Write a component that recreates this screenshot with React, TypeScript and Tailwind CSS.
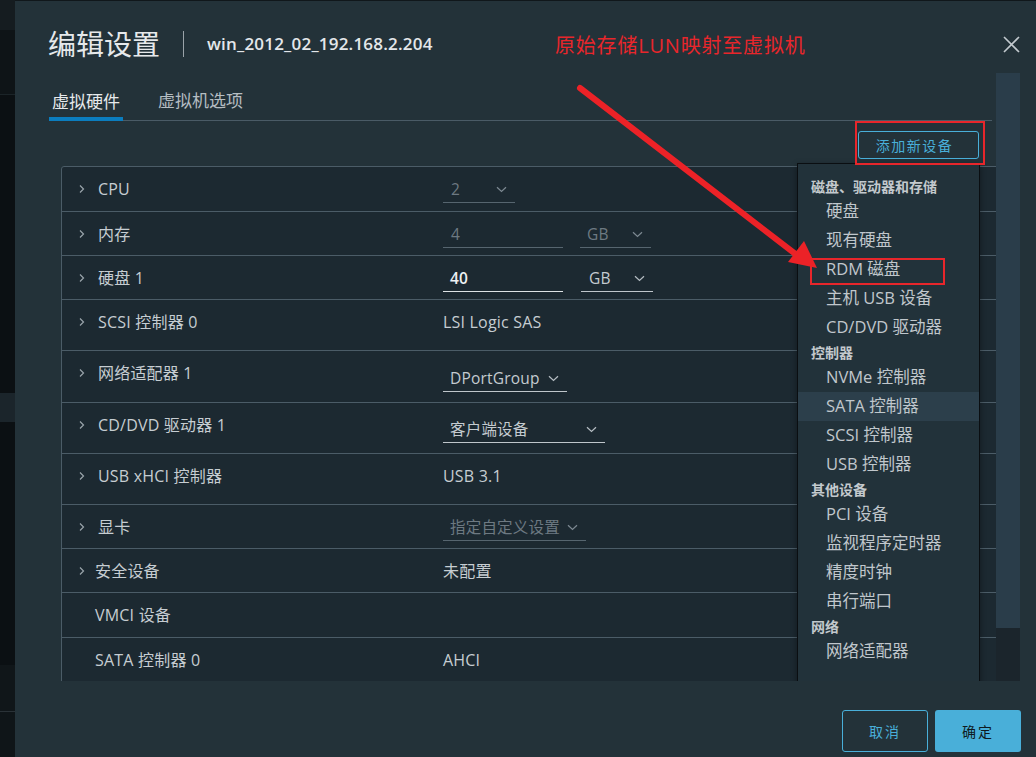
import type { ReactNode } from "react";

const FONT = "font-['Open_Sans','Noto_Sans_CJK_SC',sans-serif]";

function ChevRight() {
  return (
    <svg width="8" height="10" viewBox="0 0 8 10" className="shrink-0">
      <path d="M2 1.5 L5.5 5 L2 8.5" stroke="#9aa4ab" strokeWidth="1.2" fill="none" />
    </svg>
  );
}

function ChevDown({ color }: { color: string }) {
  return (
    <svg width="11" height="7" viewBox="0 0 11 7" className="shrink-0">
      <path d="M1 1.2 L5.5 5.5 L10 1.2" stroke={color} strokeWidth="1.2" fill="none" />
    </svg>
  );
}

type Tone = "disabled" | "normal" | "active";

const toneText: Record<Tone, string> = {
  disabled: "text-[#6d7982]",
  normal: "text-[#c4cbd0]",
  active: "text-[#eef1f3]",
};
const toneLine: Record<Tone, string> = {
  disabled: "border-[#56656f]",
  normal: "border-[#bfc6cb]",
  active: "border-[#dde2e5]",
};
const toneChev: Record<Tone, string> = {
  disabled: "#7d8992",
  normal: "#b5bdc3",
  active: "#c9d0d4",
};

function Field({
  w,
  text,
  tone,
  chevron = true,
  pl = "pl-[8px]",
}: {
  w: string;
  text: string;
  tone: Tone;
  chevron?: boolean;
  pl?: string;
}) {
  return (
    <div className={`${w} flex items-center justify-between border-b ${toneLine[tone]} ${pl} pr-[8px] pb-[3px] text-[15.5px] leading-[20px] ${toneText[tone]}`}>
      <span className={tone === "active" && !chevron ? "font-semibold" : ""}>{text}</span>
      {chevron && <ChevDown color={toneChev[tone]} />}
    </div>
  );
}

type Row = { label: string; h: string; chev: boolean; tight?: boolean; value?: ReactNode };

const rows: Row[] = [
  { label: "CPU", h: "h-[45px]", chev: true, value: <Field w="w-[72px]" text="2" tone="disabled" /> },
  {
    label: "内存",
    h: "h-[44px]",
    chev: true,
    value: (
      <div className="flex gap-[17px]">
        <Field w="w-[120px]" text="4" tone="disabled" chevron={false} />
        <Field w="w-[71px]" text="GB" tone="disabled" pl="pl-[7px]" />
      </div>
    ),
  },
  {
    label: "硬盘 1",
    h: "h-[44px]",
    chev: true,
    value: (
      <div className="flex gap-[18px]">
        <Field w="w-[120px]" text="40" tone="active" chevron={false} pl="pl-[7px]" />
        <Field w="w-[72px]" text="GB" tone="normal" pl="pl-[8px]" />
      </div>
    ),
  },
  { label: "SCSI 控制器 0", h: "h-[51px]", chev: true, value: <span className="text-[#c6cdd2]">LSI Logic SAS</span> },
  {
    label: "网络适配器 1",
    h: "h-[52px]",
    chev: true,
    value: (
      <div className="pt-[5px]">
        <Field w="w-[124px]" text="DPortGroup" tone="normal" pl="pl-[7px]" />
      </div>
    ),
  },
  {
    label: "CD/DVD 驱动器 1",
    h: "h-[51px]",
    chev: true,
    value: (
      <div className="pt-[4px]">
        <Field w="w-[162px]" text="客户端设备" tone="normal" pl="pl-[7px]" />
      </div>
    ),
  },
  { label: "USB xHCI 控制器", h: "h-[51px]", chev: true, value: <span className="text-[#c6cdd2]">USB 3.1</span> },
  {
    label: "显卡",
    h: "h-[44px]",
    chev: true,
    value: <Field w="w-[143px]" text="指定自定义设置" tone="disabled" pl="pl-[7px]" />,
  },
  { label: "安全设备", h: "h-[44px]", chev: true, tight: true, value: <span className="text-[#c6cdd2]">未配置</span> },
  { label: "VMCI 设备", h: "h-[45px]", chev: false },
  { label: "SATA 控制器 0", h: "h-[44px]", chev: false, value: <span className="text-[#c6cdd2]">AHCI</span> },
];

type MenuEntry = { kind: "h" | "i"; text: string; hover?: boolean };

const menu: MenuEntry[] = [
  { kind: "h", text: "磁盘、驱动器和存储" },
  { kind: "i", text: "硬盘" },
  { kind: "i", text: "现有硬盘" },
  { kind: "i", text: "RDM 磁盘" },
  { kind: "i", text: "主机 USB 设备" },
  { kind: "i", text: "CD/DVD 驱动器" },
  { kind: "h", text: "控制器" },
  { kind: "i", text: "NVMe 控制器" },
  { kind: "i", text: "SATA 控制器", hover: true },
  { kind: "i", text: "SCSI 控制器" },
  { kind: "i", text: "USB 控制器" },
  { kind: "h", text: "其他设备" },
  { kind: "i", text: "PCI 设备" },
  { kind: "i", text: "监视程序定时器" },
  { kind: "i", text: "精度时钟" },
  { kind: "i", text: "串行端口" },
  { kind: "h", text: "网络" },
  { kind: "i", text: "网络适配器" },
];

export default function App() {
  return (
    <div className={`relative flex h-[757px] w-[1036px] overflow-hidden bg-[#0b1013] ${FONT}`}>
      {/* background page behind the dialog */}
      <div className="flex w-[15px] shrink-0 flex-col">
        <div className="h-[30px] bg-[#151c20]" />
        <div className="h-[64px] bg-[#0e1417]" />
        <div className="h-[299px] border-t border-[#1b2428] bg-[#0b1013]" />
        <div className="h-[29px] bg-[#1b252b]" />
        <div className="h-[243px] bg-[#0b1013]" />
        <div className="h-[46px] bg-[#101619]" />
        <div className="flex-1 border-t border-[#2a3237] bg-[#0f1518]" />
      </div>

      {/* dialog */}
      <div className="flex flex-1 flex-col border-t border-[#10171b] bg-[#233239]">
        {/* header */}
        <div className="flex h-[72px] shrink-0 items-start pl-[33px] pr-[16px] pt-[23px]">
          <div className="text-[28px] leading-[40px] text-[#e6e9eb]">编辑设置</div>
          <div className="ml-[23px] mt-[7px] h-[26px] w-px bg-[#9aa3a9]" />
          <div className="ml-[23px] text-[17px] font-semibold leading-[40px] tracking-[0.2px] text-[#e3e7ea]">win_2012_02_192.168.2.204</div>
          <svg width="17" height="17" viewBox="0 0 17 17" className="ml-auto mt-[12px]">
            <path d="M1 1 L16 16 M16 1 L1 16" stroke="#c3cacf" strokeWidth="1.6" />
          </svg>
        </div>

        {/* body */}
        <div className="flex h-[608px] shrink-0">
          <div className="relative flex-1 overflow-hidden pl-[34px]">
            <div className="mr-[4px] flex h-[48px] items-end gap-[32px] border-b border-[#4a5b66]">
              <div className="-mb-px border-b-[4px] border-[#0b7dbe] px-[3px] pb-[3px] text-[17px] leading-[24px] text-[#e7eaec]">虚拟硬件</div>
              <div className="px-[3px] pb-[7px] text-[17px] leading-[24px] text-[#b5bdc2]">虚拟机选项</div>
            </div>

            <div className="flex justify-end pr-[17px] pt-[10px]">
              <button className="h-[28px] w-[121px] rounded-[3px] border border-[#49afd9] pr-[8px] text-[14px] tracking-[1.5px] text-[#49afd9]">
                添加新设备
              </button>
            </div>

            <div className="-mr-[4px] ml-[12px] mt-[7px] rounded-tl-[3px] border border-[#4b5c67] bg-[#1c2931]">
              {rows.map((r) => (
                <div key={r.label} className={`${r.h} flex border-b border-[#4b5c67] text-[16px] leading-[20px] tracking-[0.2px]`}>
                  <div className="flex w-[381px] shrink-0 items-start pt-[12px] pl-[16px]">
                    <div className={`${r.tight ? "w-[17px]" : "w-[20px]"} pt-[5px]`}>{r.chev && <ChevRight />}</div>
                    <span className={`${r.chev ? "" : "-ml-[3px]"} text-[#c6cdd2]`}>{r.label}</span>
                  </div>
                  <div className="pt-[12px]">{r.value}</div>
                </div>
              ))}
            </div>

            {/* add device dropdown */}
            <div className="absolute left-[782px] top-[90px] h-[560px] w-[183px] border border-[#0a0e11] bg-[#22323a] pt-[12px] shadow-[0_2px_6px_rgba(0,0,0,0.4)]">
              {menu.map((m) =>
                m.kind === "h" ? (
                  <div key={m.text} className="flex h-[21px] items-center pl-[13px] text-[14px] font-bold text-[#c3c9cd]">
                    {m.text}
                  </div>
                ) : (
                  <div
                    key={m.text}
                    className={`flex h-[29px] items-center pl-[28px] text-[16.5px] text-[#c0c7cc] ${m.hover ? "bg-[#2c3f4b]" : ""}`}
                  >
                    {m.text}
                  </div>
                )
              )}
            </div>
          </div>
          <div className="mr-[16px] flex w-[24px] shrink-0 flex-col bg-[#1b252c]">
            <div className="h-[555px] bg-[#2a3d4a]" />
          </div>
        </div>

        {/* footer */}
        <div className="flex flex-1 items-start justify-end gap-[7px] pr-[15px] pt-[29px]">
          <button className="h-[42px] w-[86px] rounded-[3px] border border-[#49afd9] text-[14px] tracking-[2px] text-[#49afd9]">取消</button>
          <button className="h-[42px] w-[86px] rounded-[3px] bg-[#49afd9] text-[14px] tracking-[2px] text-[#0f1a20]">确定</button>
        </div>
      </div>

      {/* annotations */}
      <div className="absolute left-[555px] top-[32px] text-[20px] leading-[28px] tracking-[0.8px] text-[#e8262b]">原始存储LUN映射至虚拟机</div>
      <div className="absolute left-[855px] top-[121px] h-[44px] w-[130px] border-2 border-[#e8262b]" />
      <div className="absolute left-[810px] top-[258px] h-[27px] w-[135px] border-2 border-[#e8262b]" />
      <svg className="pointer-events-none absolute left-0 top-0" width="1036" height="757">
        <line x1="580" y1="88" x2="798" y2="256" stroke="#ec2227" strokeWidth="6" strokeLinecap="round" />
        <polygon points="817,268 788,262 804,241" fill="#ec2227" />
      </svg>
    </div>
  );
}
